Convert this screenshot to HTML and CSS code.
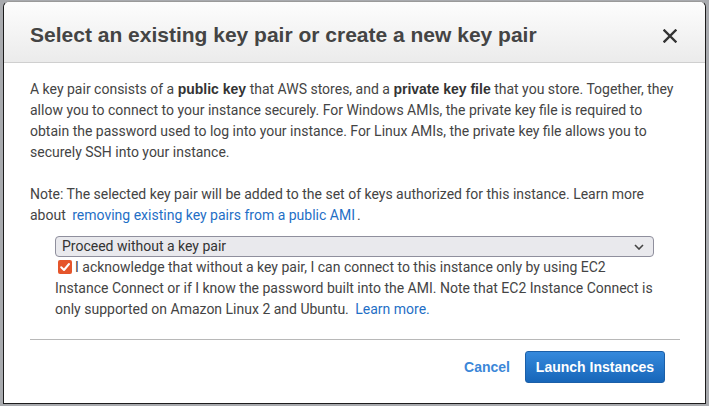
FILE: index.html
```html
<!DOCTYPE html>
<html>
<head>
<meta charset="utf-8">
<link rel="stylesheet" href="styles.css">
</head>
<body>
<div class="modal">
  <div class="modal-header">
    <h1 class="title">Select an existing key pair or create a new key pair</h1>
    <button class="close" aria-label="Close">
      <svg width="14" height="14" viewBox="0 0 14 14"><path d="M1.5 1.5 L12.5 12.5 M12.5 1.5 L1.5 12.5" stroke="#333" stroke-width="2.4" stroke-linecap="square" fill="none"/></svg>
    </button>
  </div>
  <div class="modal-body">
    <p class="para">A key pair consists of a <b>public key</b> that AWS stores, and a <b>private key file</b> that you store. Together, they allow you to connect to your instance securely. For Windows AMIs, the private key file is required to obtain the password used to log into your instance. For Linux AMIs, the private key file allows you to securely SSH into your instance.</p>
    <p class="para">Note: The selected key pair will be added to the set of keys authorized for this instance. Learn more about <a class="link link-ami" href="#">removing existing key pairs from a public AMI</a>.</p>
    <div class="choice">
      <div class="select">
        <span>Proceed without a key pair</span>
        <svg class="chev" width="10" height="6" viewBox="0 0 10 6"><path d="M1 1 L5 5 L9 1" stroke="#444" stroke-width="1.6" fill="none"/></svg>
      </div>
      <p class="ack"><span class="check"><svg width="14" height="14" viewBox="0 0 14 14"><path d="M3.2 7.2 L6 10 L11 4" stroke="#fff" stroke-width="2" fill="none" stroke-linecap="round" stroke-linejoin="round"/></svg></span>I acknowledge that without a key pair, I can connect to this instance only by using EC2 Instance Connect or if I know the password built into the AMI. Note that EC2 Instance Connect is only supported on Amazon Linux 2 and Ubuntu. <a class="link" href="#">Learn more.</a></p>
    </div>
  </div>
  <div class="modal-footer">
    <a class="cancel" href="#">Cancel</a>
    <button class="primary">Launch Instances</button>
  </div>
</div>
</body>
</html>
```
FILE: styles.css
```css
html, body {
  margin: 0;
  padding: 0;
  height: 100%;
}
body {
  background: #a8aaae;
  padding: 1px 3px 1px 3px;
  box-sizing: border-box;
  height: 406px;
  overflow: hidden;
}
.modal {
  background: #fff;
  border: 1px solid #1c1c1c;
  border-top-color: #9a9a9a;
  border-radius: 6px 6px 0 0;
  height: 403px;
  box-sizing: border-box;
  display: flex;
  flex-direction: column;
}
.modal-header {
  height: 61px;
  box-sizing: border-box;
  border-bottom: 1px solid #cfcfcf;
  background: linear-gradient(#fdfdfd, #ebebeb);
  border-radius: 6px 6px 0 0;
  display: flex;
  align-items: center;
  justify-content: space-between;
  padding: 5px 26px 0 26px;
}
.title {
  margin: 0;
  font-family: "Liberation Sans", Arial, sans-serif;
  font-weight: bold;
  font-size: 21px;
  color: #444;
}
.close {
  border: 0;
  background: none;
  padding: 0;
  width: 14px;
  height: 14px;
  margin-right: 2px;
  margin-top: 2px;
  display: flex;
}
.modal-body {
  padding: 16px 26px 0 26px;
  font-family: Roboto, "Liberation Sans", sans-serif;
  font-size: 14px;
  line-height: 21px;
  color: #444;
}
.para {
  margin: 0 0 21px 0;
}
.para:nth-of-type(2) {
  margin-bottom: 10px;
}
.para b {
  font-family: "Liberation Sans", Arial, sans-serif;
  font-weight: bold;
  color: #333;
}
.link {
  color: #1f6fc6;
  text-decoration: none;
  margin-left: 3px;
}
.link-ami {
  margin-right: 2px;
}
.choice {
  margin-left: 25px;
  margin-right: 25px;
}
.select {
  height: 21px;
  box-sizing: border-box;
  border: 1px solid #8f8f9d;
  border-radius: 4px;
  background: #e9e9ed;
  display: flex;
  align-items: center;
  justify-content: space-between;
  padding: 0 9px 0 6px;
  color: #333;
  line-height: 19px;
}
.ack {
  margin: 0;
  color: #444;
}
.check {
  display: inline-flex;
  width: 14px;
  height: 14px;
  background: #e5552b;
  border-radius: 2px;
  vertical-align: -2px;
  margin-left: 3px;
  margin-right: 3px;
}
.modal-footer {
  margin: auto 25px 0 26px;
  border-top: 1px solid #b8b8b8;
  display: flex;
  justify-content: flex-end;
  align-items: center;
  gap: 15px;
  padding: 11px 15px 20px 0;
}
.cancel {
  font-family: "Liberation Sans", Arial, sans-serif;
  font-weight: bold;
  font-size: 14px;
  color: #3b87d8;
  text-decoration: none;
}
.primary {
  font-family: "Liberation Sans", Arial, sans-serif;
  font-weight: bold;
  font-size: 14px;
  color: #fff;
  height: 32px;
  width: 140px;
  border: 1px solid #1b5fa8;
  border-radius: 3px;
  background: linear-gradient(#3589dc, #1766b9);
  padding: 0;
}
```
